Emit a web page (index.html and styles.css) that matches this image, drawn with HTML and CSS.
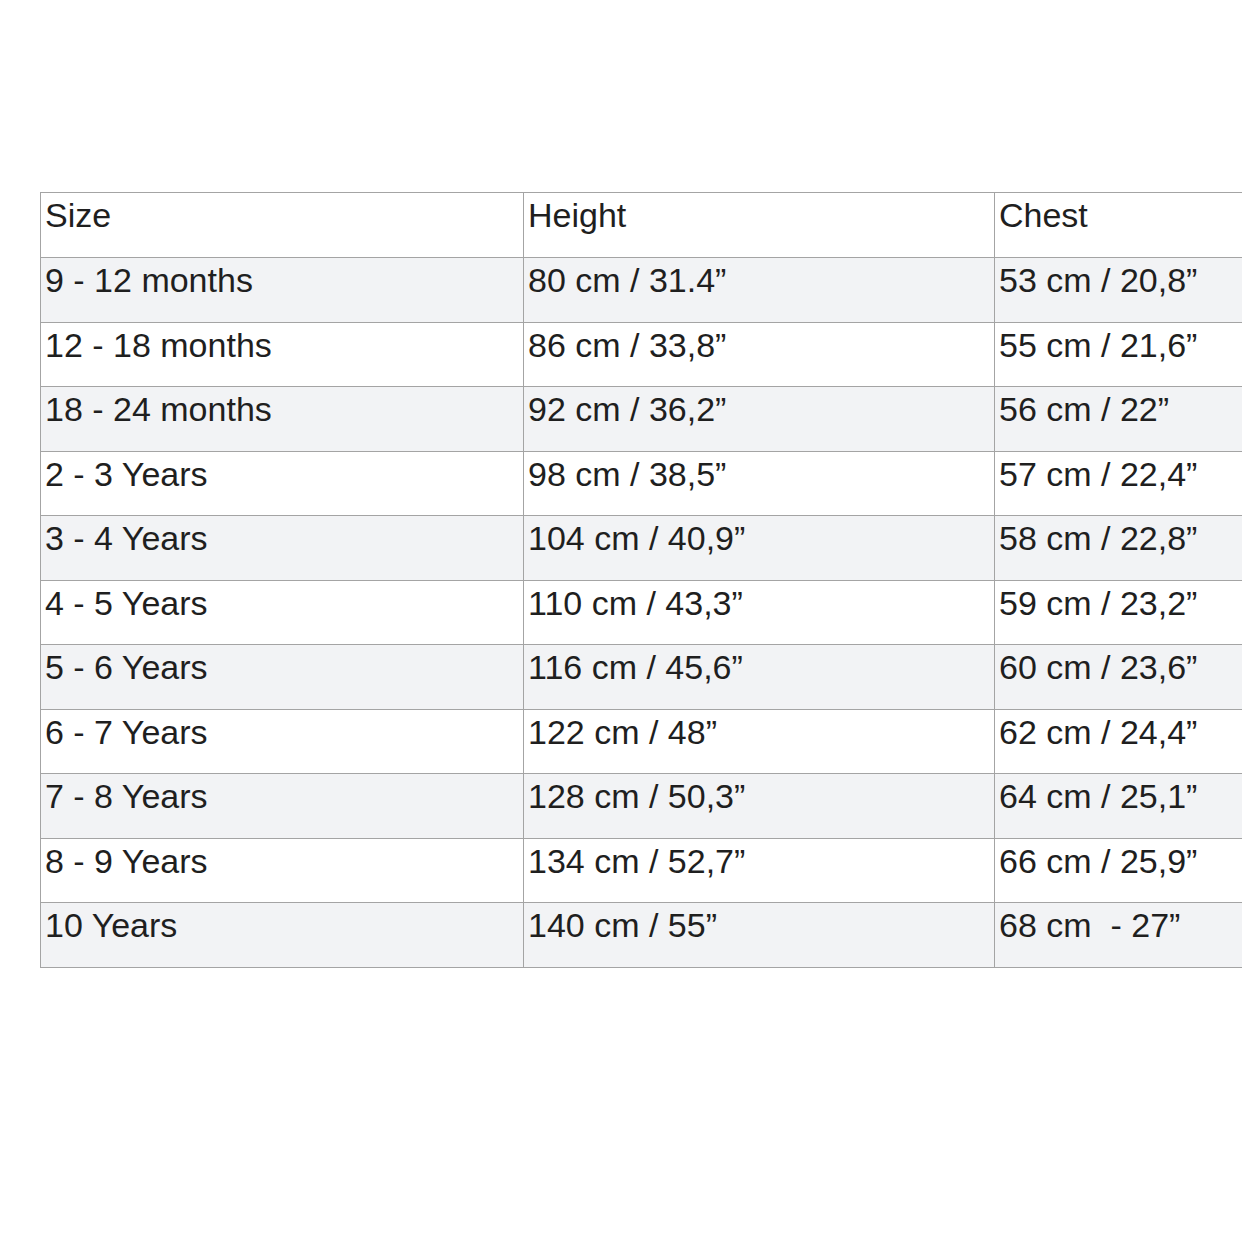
FILE: index.html
```html
<!DOCTYPE html>
<html lang="en">
<head>
<meta charset="utf-8">
<title>Size chart</title>
<link rel="stylesheet" href="styles.css">
</head>
<body>
<div class="chart">
  <div class="row head"><div class="cell">Size</div><div class="cell">Height</div><div class="cell">Chest</div></div>
  <div class="row alt"><div class="cell">9 - 12 months</div><div class="cell">80 cm / 31.4”</div><div class="cell">53 cm / 20,8”</div></div>
  <div class="row"><div class="cell">12 - 18 months</div><div class="cell">86 cm / 33,8”</div><div class="cell">55 cm / 21,6”</div></div>
  <div class="row alt"><div class="cell">18 - 24 months</div><div class="cell">92 cm / 36,2”</div><div class="cell">56 cm / 22”</div></div>
  <div class="row"><div class="cell">2 - 3 Years</div><div class="cell">98 cm / 38,5”</div><div class="cell">57 cm / 22,4”</div></div>
  <div class="row alt"><div class="cell">3 - 4 Years</div><div class="cell">104 cm / 40,9”</div><div class="cell">58 cm / 22,8”</div></div>
  <div class="row"><div class="cell">4 - 5 Years</div><div class="cell">110 cm / 43,3”</div><div class="cell">59 cm / 23,2”</div></div>
  <div class="row alt"><div class="cell">5 - 6 Years</div><div class="cell">116 cm / 45,6”</div><div class="cell">60 cm / 23,6”</div></div>
  <div class="row"><div class="cell">6 - 7 Years</div><div class="cell">122 cm / 48”</div><div class="cell">62 cm / 24,4”</div></div>
  <div class="row alt"><div class="cell">7 - 8 Years</div><div class="cell">128 cm / 50,3”</div><div class="cell">64 cm / 25,1”</div></div>
  <div class="row"><div class="cell">8 - 9 Years</div><div class="cell">134 cm / 52,7”</div><div class="cell">66 cm / 25,9”</div></div>
  <div class="row alt"><div class="cell">10 Years</div><div class="cell">140 cm / 55”</div><div class="cell">68 cm  - 27”</div></div>
</div>
</body>
</html>
```

FILE: styles.css
```css
html, body {
  margin: 0;
  padding: 0;
  background: #ffffff;
  overflow: hidden;
  width: 1242px;
  height: 1242px;
}
body {
  padding: 192px 0 0 40px;
  box-sizing: border-box;
  font-family: "Liberation Sans", Arial, Helvetica, sans-serif;
  color: #1f1f1f;
}
.chart {
  width: 1202px;
  display: grid;
  grid-template-rows: 65px 65px 64px 65px 64px 65px 64px 65px 64px 65px 64px 65px;
  border-bottom: 1px solid #a4a4a4;
}
.row {
  display: grid;
  grid-template-columns: 483px 471px 1fr;
  border-top: 1px solid #a4a4a4;
  background: #ffffff;
}
.row.alt {
  background: #f2f3f5;
}
.cell {
  border-left: 1px solid #a4a4a4;
  padding: 3px 0 0 4px;
  font-size: 34px;
  line-height: 39px;
  white-space: pre;
  overflow: hidden;
}
```
